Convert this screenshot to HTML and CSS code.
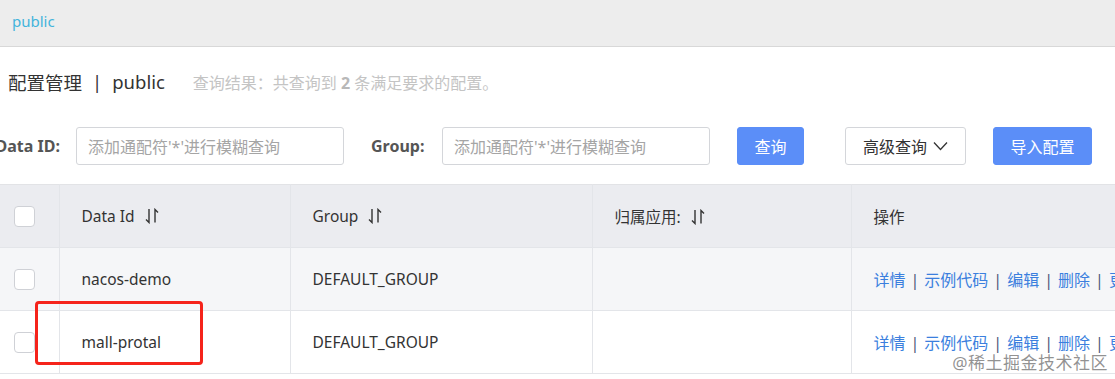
FILE: index.html
```html
<!DOCTYPE html>
<html lang="zh-CN">
<head>
<meta charset="utf-8">
<title>配置管理</title>
<link rel="stylesheet" href="styles.css">
</head>
<body>
<div class="page">
  <div class="topbar"><span class="ns">public</span></div>

  <div class="title-row">
    <span class="title">配置管理</span>
    <span class="title-sep">|</span>
    <span class="title">public</span>
    <span class="summary">查询结果：共查询到 <b>2</b> 条满足要求的配置。</span>
  </div>

  <div class="search-row">
    <label class="lbl lbl-first"><span>Data ID:</span></label>
    <div class="input"><span class="ph">添加通配符'*'进行模糊查询</span></div>
    <label class="lbl lbl-group">Group:</label>
    <div class="input"><span class="ph">添加通配符'*'进行模糊查询</span></div>
    <button class="btn btn-primary btn-query">查询</button>
    <button class="btn btn-normal btn-adv">高级查询
      <svg class="chev" width="15" height="10" viewBox="0 0 15 10"><polyline points="1,1.5 7.5,8.5 14,1.5" fill="none" stroke="#333" stroke-width="1.3"/></svg>
    </button>
    <button class="btn btn-primary btn-import">导入配置</button>
  </div>

  <div class="table-wrap">
    <table class="tbl">
      <colgroup>
        <col class="c1"><col class="c2"><col class="c3"><col class="c4"><col class="c5">
      </colgroup>
      <thead>
        <tr>
          <th class="cb-cell"><span class="cb"></span></th>
          <th>Data Id <svg class="sort" width="14" height="16" viewBox="0 0 14 16"><path d="M4 1 V14.5 L1 11.5 M10 14.5 V1.5 L13 4.5" fill="none" stroke="#333" stroke-width="1.4"/></svg></th>
          <th>Group <svg class="sort" width="14" height="16" viewBox="0 0 14 16"><path d="M4 1 V14.5 L1 11.5 M10 14.5 V1.5 L13 4.5" fill="none" stroke="#333" stroke-width="1.4"/></svg></th>
          <th>归属应用: <svg class="sort" width="14" height="16" viewBox="0 0 14 16"><path d="M4 1 V14.5 L1 11.5 M10 14.5 V1.5 L13 4.5" fill="none" stroke="#333" stroke-width="1.4"/></svg></th>
          <th>操作</th>
        </tr>
      </thead>
      <tbody>
        <tr class="hover">
          <td class="cb-cell"><span class="cb"></span></td>
          <td>nacos-demo</td>
          <td>DEFAULT_GROUP</td>
          <td></td>
          <td class="ops"><a>详情</a><i>|</i><a>示例代码</a><i>|</i><a>编辑</a><i>|</i><a>删除</a><i>|</i><a>更多</a></td>
        </tr>
        <tr>
          <td class="cb-cell"><span class="cb"></span></td>
          <td>mall-protal</td>
          <td>DEFAULT_GROUP</td>
          <td></td>
          <td class="ops"><a>详情</a><i>|</i><a>示例代码</a><i>|</i><a>编辑</a><i>|</i><a>删除</a><i>|</i><a>更多</a></td>
        </tr>
      </tbody>
    </table>
  </div>

  <div class="highlight"></div>
  <div class="watermark">@稀土掘金技术社区</div>
</div>
</body>
</html>
```

FILE: styles.css
```css
html, body {
  margin: 0;
  padding: 0;
  background: #fff;
}
body {
  width: 1115px;
  height: 379px;
  overflow: hidden;
  font-family: "Noto Sans", "Noto Sans CJK SC", sans-serif;
  color: #333;
}
.page {
  position: relative;
  width: 1115px;
  height: 379px;
  overflow: hidden;
}
.topbar {
  background: #ededed;
  border-bottom: 1px solid #d8d8d8;
  display: flex;
  align-items: center;
  padding-left: 12px;
  padding-bottom: 5px;
  height: 41px;
}
.ns {
  font-size: 15px;
  color: #42b4dc;
}
.title-row {
  height: 69px;
  display: flex;
  align-items: center;
  padding-left: 8px;
  padding-bottom: 1px;
}
.title {
  font-size: 18.5px;
  color: #333;
}
.title-sep {
  font-size: 18.5px;
  margin: 0 10px;
  color: #333;
}
.summary {
  font-size: 16px;
  color: #c4c4c4;
  margin-left: 28px;
}
.summary b {
  color: #b8b8b8;
}
.search-row {
  margin-top: 10px;
  height: 38px;
  display: flex;
  align-items: center;
}
.lbl {
  font-size: 16px;
  font-weight: bold;
  color: #555;
  white-space: nowrap;
}
.lbl-first {
  width: 60px;
  display: flex;
  justify-content: flex-end;
  margin-right: 16px;
}
.lbl-group {
  margin-left: 27px;
  margin-right: 16px;
  width: 55px;
}
.input {
  width: 268px;
  height: 38px;
  box-sizing: border-box;
  border: 1px solid #d4d6da;
  border-radius: 3px;
  display: flex;
  align-items: center;
  padding-left: 11px;
}
.ph {
  font-size: 16px;
  color: #a5a5a5;
  white-space: nowrap;
}
.btn {
  height: 38px;
  box-sizing: border-box;
  border-radius: 3px;
  font-family: "Noto Sans", "Noto Sans CJK SC", sans-serif;
  font-size: 16px;
  padding: 0;
  display: flex;
  align-items: center;
  justify-content: center;
}
.btn-primary {
  background: #5b8ef8;
  color: #fff;
  border: 1px solid #5b8ef8;
}
.btn-normal {
  background: #fff;
  color: #333;
  border: 1px solid #d4d6da;
}
.btn-query {
  width: 67px;
  margin-left: 27px;
}
.btn-adv {
  width: 121px;
  margin-left: 41px;
}
.chev {
  margin-left: 6px;
}
.btn-import {
  width: 99px;
  margin-left: 27px;
}
.table-wrap {
  margin-top: 19px;
  width: 1115px;
  overflow: hidden;
}
.tbl {
  border-collapse: collapse;
  width: 1200px;
  table-layout: fixed;
  font-size: 15.5px;
}
.c1 { width: 59px; }
.c2 { width: 231px; }
.c3 { width: 302px; }
.c4 { width: 259px; }
.c5 { width: 349px; }
.tbl th, .tbl td {
  text-align: left;
  font-weight: normal;
  padding: 0 0 0 22px;
  border: 1px solid #e3e5e9;
  white-space: nowrap;
  color: #333;
}
.tbl th {
  height: 62px;
  background: #ebecf0;
  border-top-color: #e2e3e6;
}
.tbl td {
  height: 62px;
}
.tbl th:first-child,
.tbl td:first-child {
  border-left: none;
}
.tbl tr.hover td {
  background: #f5f6f8;
}
.tbl .cb-cell {
  padding-left: 14px;
}
.cb {
  display: block;
  width: 21px;
  height: 21px;
  box-sizing: border-box;
  border: 1px solid #cfd1d6;
  border-radius: 4px;
  background: #fff;
}
.sort {
  vertical-align: -2px;
  margin-left: 6px;
}
.ops {
  font-size: 16px;
}
.ops a {
  color: #3b7fde;
}
.ops i {
  font-style: normal;
  color: #4d5a7c;
  margin: 0 5px;
}
.highlight {
  position: absolute;
  left: 35px;
  top: 301px;
  width: 168px;
  height: 64px;
  box-sizing: border-box;
  border: 3px solid #f5231b;
  border-radius: 4px;
}
.watermark {
  position: absolute;
  right: 7px;
  top: 349px;
  font-size: 17px;
  color: rgba(110, 110, 110, 0.75);
  white-space: nowrap;
  letter-spacing: 0.5px;
}
```
